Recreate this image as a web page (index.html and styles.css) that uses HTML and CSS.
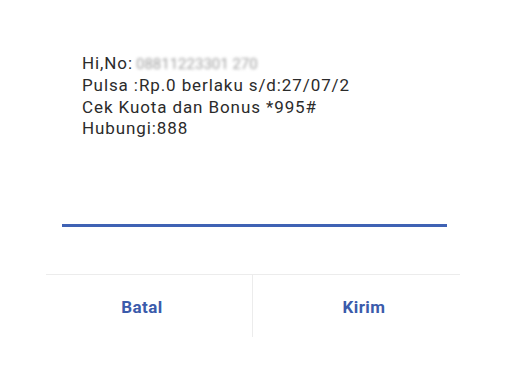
FILE: index.html
```html
<!DOCTYPE html>
<html lang="en">
<head>
    <meta charset="UTF-8">
    <meta name="viewport" content="width=device-width, initial-scale=1.0">
    <title>USSD</title>
    <link rel="stylesheet" href="styles.css">
</head>
<body>
    <div class="dialog">
        <div class="message">
            <div>Hi,No:<span class="masked">08811223301 270</span></div>
            <div>Pulsa :Rp.0 berlaku s/d:27/07/2</div>
            <div>Cek Kuota dan Bonus *995#</div>
            <div>Hubungi:888</div>
        </div>
        <div class="reply-input"></div>
        <div class="actions">
            <button class="action action-left">Batal</button>
            <button class="action action-right">Kirim</button>
        </div>
    </div>
</body>
</html>
```

FILE: styles.css
```css
body {
    margin: 0;
    padding: 0;
    background: #ffffff;
    font-family: Roboto, 'Noto Sans', sans-serif;
    color: #2b2b2b;
}
.dialog {
    width: 414px;
    margin-left: 46px;
    padding-top: 53px;
}
.message {
    padding-left: 36px;
    font-size: 17px;
    line-height: 21.3px;
    letter-spacing: 0.9px;
}
.masked {
    display: inline-block;
    color: #a0a0a0;
    font-size: 15px;
    letter-spacing: 0;
    filter: blur(1.4px);
    margin-left: 3px;
}
.reply-input {
    height: 3px;
    width: 385px;
    margin: 85px 0 0 16px;
    background: #3f62b4;
}
.actions {
    display: flex;
    margin-top: 47px;
    border-top: 1px solid #ececec;
}
.action {
    flex: 1;
    height: 62px;
    padding: 2px 0 0 0;
    border: none;
    background: transparent;
    font-family: Roboto, 'Noto Sans', sans-serif;
    font-size: 17px;
    font-weight: bold;
    letter-spacing: 0.4px;
    color: #3b5bab;
    cursor: pointer;
}
.action-left {
    padding-right: 14px;
    border-right: 1px solid #ececec;
}
.action-right {
    padding-left: 15px;
}
```
